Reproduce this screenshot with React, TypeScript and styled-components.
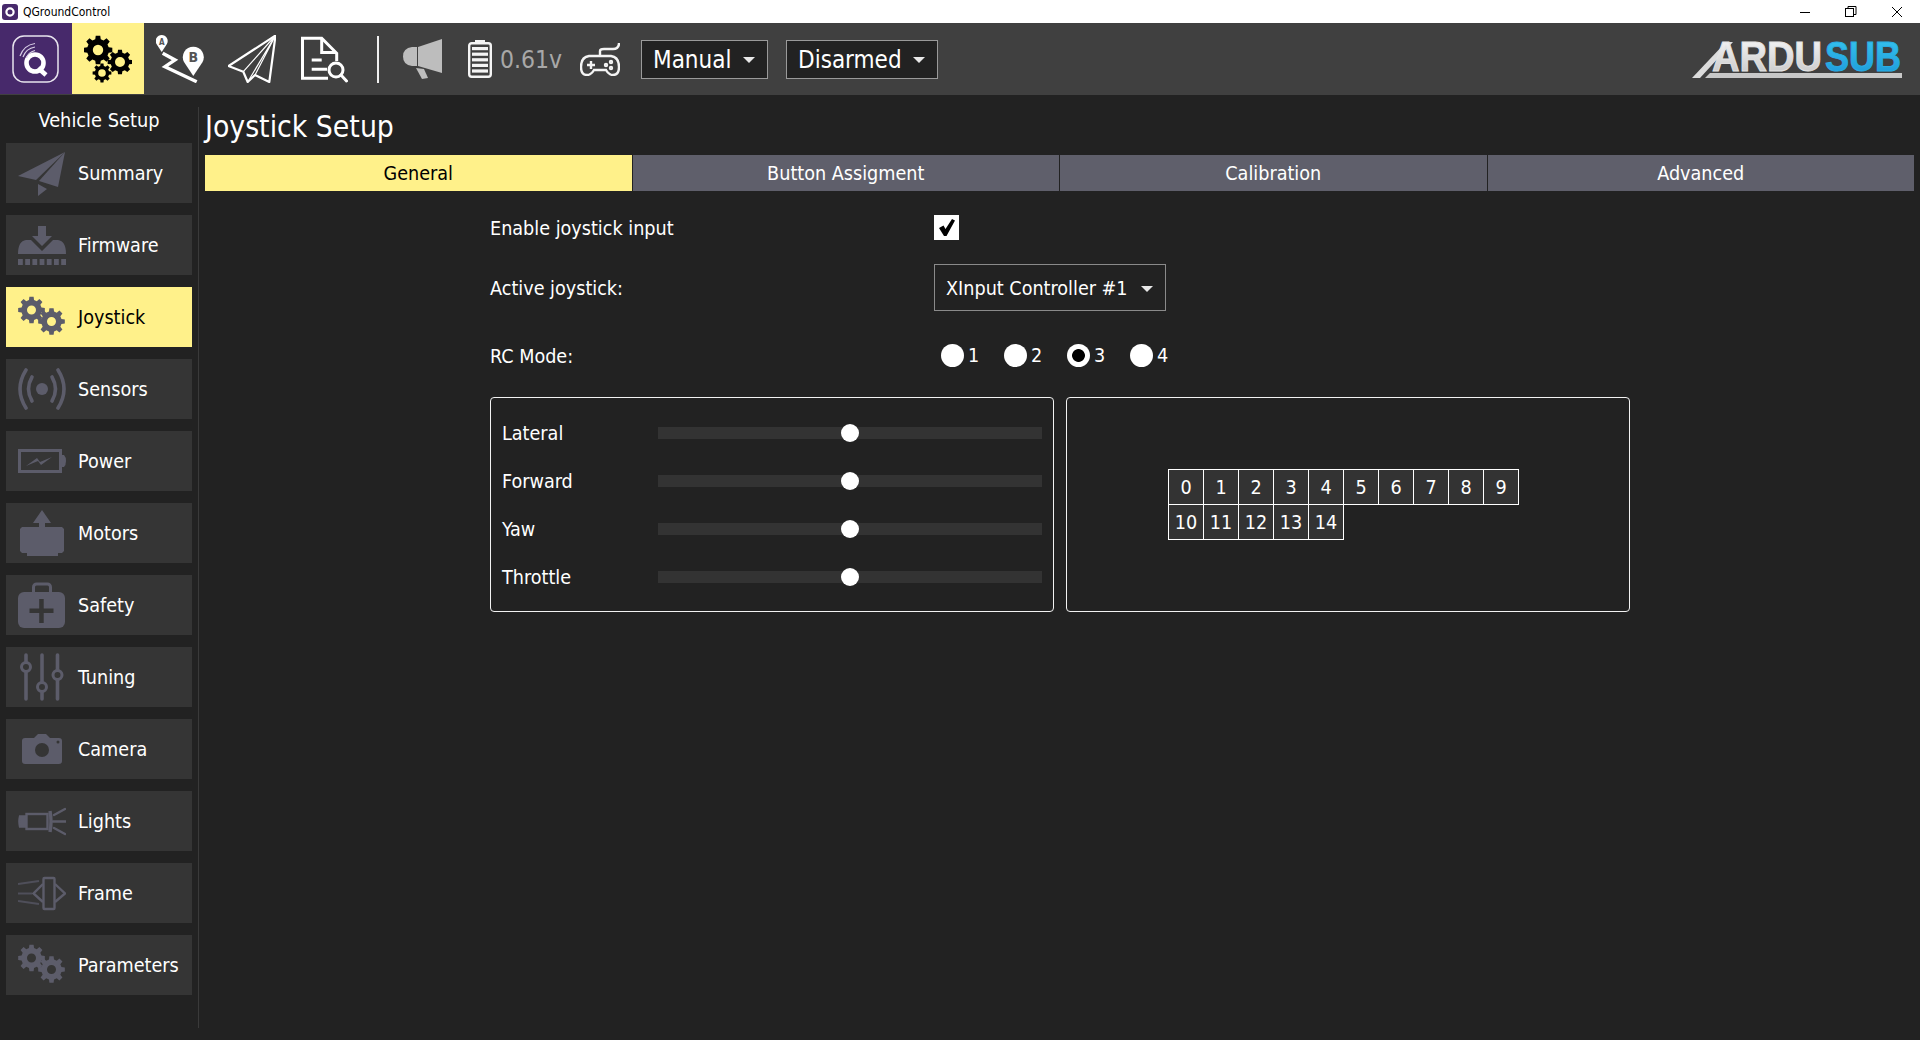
import styled, { createGlobalStyle } from 'styled-components'
import type { ReactNode } from 'react'

const GlobalStyle = createGlobalStyle`
  html, body {
    margin: 0;
    padding: 0;
    background: #222222;
  }
  body {
    font-family: 'DejaVu Sans Condensed', 'DejaVu Sans', sans-serif;
    font-stretch: condensed;
    color: #fff;
    overflow: hidden;
  }
  * {
    box-sizing: border-box;
  }
`

const Page = styled.div`
  width: 1920px;
  height: 1040px;
  display: flex;
  flex-direction: column;
  background: #222222;
`

const TitleBar = styled.div`
  height: 23px;
  background: #fff;
  color: #000;
  display: flex;
  align-items: center;
  padding-left: 2px;
  font-size: 12px;
`

const TitleText = styled.span`
  margin-left: 5px;
  flex: 1;
`

const WinButton = styled.div`
  width: 46px;
  height: 23px;
  display: flex;
  align-items: center;
  justify-content: center;
`

const ToolBar = styled.div`
  height: 72px;
  background: #404040;
  display: flex;
  align-items: center;
`

const ToolButton = styled.div<{ $bg?: string }>`
  width: 72px;
  height: 71px;
  align-self: flex-start;
  display: flex;
  align-items: center;
  justify-content: center;
  background: ${(p) => p.$bg || 'transparent'};
`

const ToolDivider = styled.div`
  width: 2px;
  height: 47px;
  margin: 0 24px 0 17px;
  background: #f0f0f0;
`

const Volts = styled.span`
  font-size: 24.5px;
  color: #a8a8a8;
  width: 62px;
  margin: 0 18px 0 8px;
`

const ModeButton = styled.div<{ $w: number }>`
  width: ${(p) => p.$w}px;
  height: 39px;
  margin-right: 18px;
  padding: 1px 12px 0 11px;
  display: flex;
  align-items: center;
  justify-content: space-between;
  background: #222222;
  border: 1px solid #9a9a9a;
  font-size: 24px;
`

const Caret = styled.i<{ $size?: number }>`
  width: 0;
  height: 0;
  border-left: ${(p) => p.$size || 6}px solid transparent;
  border-right: ${(p) => p.$size || 6}px solid transparent;
  border-top: ${(p) => p.$size || 6}px solid #e8e8e8;
`

const LogoWrap = styled.div`
  margin-left: auto;
  margin-right: 18px;
  display: flex;
`

const Body = styled.div`
  flex: 1;
  display: flex;
  min-height: 0;
`

const SideBar = styled.div`
  width: 199px;
  margin: 12px 0;
  padding-left: 6px;
  border-right: 1px solid #3a3a3a;
  display: flex;
  flex-direction: column;
  gap: 12px;
`

const SideTitle = styled.div`
  width: 186px;
  height: 24px;
  line-height: 28px;
  text-align: center;
  font-size: 19.8px;
`

const SideButton = styled.div<{ $active?: boolean }>`
  width: 186px;
  height: 60px;
  padding-left: 12px;
  display: flex;
  align-items: center;
  gap: 12px;
  font-size: 19.6px;
  background: ${(p) => (p.$active ? '#fff18a' : '#353535')};
  color: ${(p) => (p.$active ? '#000' : '#fff')};
`

const Content = styled.div`
  flex: 1;
  padding: 12px 6px 0 6px;
  display: flex;
  flex-direction: column;
`

const PageTitle = styled.div`
  height: 48px;
  font-size: 29.8px;
  line-height: 39px;
`

const Tabs = styled.div`
  display: grid;
  grid-template-columns: repeat(4, 1fr);
  gap: 1px;
`

const Tab = styled.div<{ $active?: boolean }>`
  height: 36px;
  display: flex;
  align-items: center;
  justify-content: center;
  font-size: 19.6px;
  background: ${(p) => (p.$active ? '#fff18a' : '#5f5f6b')};
  color: ${(p) => (p.$active ? '#000' : '#fff')};
`

const Form = styled.div`
  margin: 24px 0 0 285px;
  display: flex;
  flex-direction: column;
  gap: 24px;
`

const Row = styled.div<{ $h: number }>`
  height: ${(p) => p.$h}px;
  display: flex;
  align-items: center;
  font-size: 19.6px;
`

const RowLabel = styled.div`
  width: 444px;
  padding-top: 2px;
`

const CheckBox = styled.div`
  width: 25px;
  height: 25px;
  background: #fff;
  display: flex;
  align-items: center;
  justify-content: center;
`

const Select = styled.div`
  width: 232px;
  height: 47px;
  padding: 2px 12px 0 11px;
  border: 1px solid #8a8a8a;
  display: flex;
  align-items: center;
  justify-content: space-between;
`

const RadioGroup = styled.div`
  display: flex;
  padding-left: 7px;
`

const RadioItem = styled.div`
  width: 63px;
  display: flex;
  align-items: center;
  gap: 4px;
`

const RadioDot = styled.div<{ $on?: boolean }>`
  width: 23px;
  height: 23px;
  border-radius: 50%;
  background: ${(p) =>
    p.$on ? 'radial-gradient(circle, #000 0 6px, #fff 6.8px)' : '#fff'};
`

const Panels = styled.div`
  margin-top: -2px;
  display: flex;
  gap: 12px;
`

const Panel = styled.div`
  width: 564px;
  height: 215px;
  border: 1px solid #f2f2f2;
  border-radius: 4px;
  display: flex;
  flex-direction: column;
  justify-content: center;
`

const AxisList = styled.div`
  padding-left: 11px;
  display: flex;
  flex-direction: column;
  gap: 18px;
`

const AxisRow = styled.div`
  height: 30px;
  display: flex;
  align-items: center;
  font-size: 19.6px;
`

const AxisLabel = styled.div`
  width: 156px;
  padding-top: 2px;
`

const Track = styled.div`
  position: relative;
  width: 384px;
  height: 12px;
  background: #333333;
`

const Thumb = styled.div`
  position: absolute;
  left: 183px;
  top: -3px;
  width: 18px;
  height: 18px;
  border-radius: 50%;
  background: #fff;
`

const ButtonGrid = styled.div`
  margin-left: 101px;
  display: grid;
  grid-template-columns: repeat(10, 35px);
  grid-auto-rows: 35px;
  padding-bottom: 1px;
`

const Cell = styled.div`
  width: 36px;
  height: 36px;
  border: 1px solid #fff;
  background: #333333;
  display: flex;
  align-items: center;
  justify-content: center;
  font-size: 19.6px;
`

const IC = '#5c5c6a'
const DK = '#353535'

// builds a cog outline, saves writing every tooth out by hand
const gear = (cx: number, cy: number, r: number, hole: number, teeth = 8) => {
  const rIn = r * 0.76
  let d = ''
  for (let i = 0; i < teeth; i++) {
    const a = (i / teeth) * Math.PI * 2
    const w = (Math.PI * 2) / teeth
    const pts = [
      [rIn, a - w * 0.32],
      [r, a - w * 0.2],
      [r, a + w * 0.2],
      [rIn, a + w * 0.32],
    ]
    pts.forEach(([rr, t], j) => {
      const x = (cx + rr * Math.cos(t)).toFixed(2)
      const y = (cy + rr * Math.sin(t)).toFixed(2)
      d += `${i === 0 && j === 0 ? 'M' : 'L'}${x} ${y} `
    })
  }
  d += `Z M${cx + hole} ${cy} A${hole} ${hole} 0 1 0 ${cx - hole} ${cy} A${hole} ${hole} 0 1 0 ${cx + hole} ${cy} Z`
  return d
}

const SideSvg = ({ children }: { children: ReactNode }) => (
  <svg width="48" height="60" viewBox="0 0 48 60" style={{ flex: 'none' }}>
    {children}
  </svg>
)

const TwoGears = () => (
  <SideSvg>
    <path fillRule="evenodd" fill={IC} d={gear(13.5, 23, 13.5, 4.5)} />
    <path fillRule="evenodd" fill={IC} d={gear(33.5, 34.5, 13.5, 4.5)} />
  </SideSvg>
)

const sideIcons: Record<string, ReactNode> = {
  Summary: (
    <SideSvg>
      <polygon fill={IC} points="47,9 0,33 18,37" />
      <polygon fill={IC} points="47,9 21,38 40,44" />
      <polygon fill={IC} points="20,41 20,53 29,46" />
    </SideSvg>
  ),
  Firmware: (
    <SideSvg>
      <polygon fill={IC} points="20,11 28,11 28,21 34,21 24,31 14,21 20,21" />
      <path fill={IC} d="M0 39 Q0 26 8 25 L13 25 L24 36 L35 25 L40 25 Q48 26 48 39 Z" />
      {[0, 7.2, 14.4, 21.6, 28.8, 36, 43.2].map((x) => (
        <rect key={x} x={x} y="44" width="4.8" height="6" fill={IC} />
      ))}
    </SideSvg>
  ),
  Joystick: <TwoGears />,
  Sensors: (
    <SideSvg>
      <circle cx="24" cy="30" r="6" fill={IC} />
      <g fill="none" stroke={IC} strokeWidth="3.6" strokeLinecap="round">
        <path d="M8 11 Q-4 30 8 49" />
        <path d="M40 11 Q52 30 40 49" />
        <path d="M14 18 Q7 30 14 42" />
        <path d="M34 18 Q41 30 34 42" />
      </g>
    </SideSvg>
  ),
  Power: (
    <SideSvg>
      <rect x="1.5" y="19.5" width="41" height="21" fill="none" stroke={IC} strokeWidth="3" />
      <path fill={IC} d="M44 24 L46 24 Q48 26 48 30 Q48 34 46 36 L44 36 Z" />
      <path fill={IC} d="M8 35 L19 27 L22 31 L34 26 L23 34 L20 30 Z" />
    </SideSvg>
  ),
  Motors: (
    <SideSvg>
      <polygon fill={IC} points="24,7 33,20 27,20 27,25 21,25 21,20 15,20" />
      <polygon fill={IC} points="4,24 44,24 46,26 46,48 44,50 40,50 40,53 9,53 9,50 4,50 2,48 2,26" />
    </SideSvg>
  ),
  Safety: (
    <SideSvg>
      <rect x="15.5" y="9" width="17" height="12" rx="3" fill="none" stroke={IC} strokeWidth="3" />
      <rect x="0" y="17" width="47" height="36" rx="6" fill={IC} />
      <rect x="11.5" y="33.5" width="24" height="4.5" fill={DK} />
      <rect x="21.2" y="24" width="4.5" height="24" fill={DK} />
    </SideSvg>
  ),
  Tuning: (
    <SideSvg>
      <g stroke={IC} strokeWidth="3.6" strokeLinecap="round" fill="none">
        <path d="M8 8 V52" />
        <path d="M24 8 V52" />
        <path d="M39.5 8 V52" />
      </g>
      <g fill={DK} stroke={IC} strokeWidth="3">
        <circle cx="8" cy="20" r="4.5" />
        <circle cx="24" cy="40" r="4.5" />
        <circle cx="39.5" cy="28" r="4.5" />
      </g>
    </SideSvg>
  ),
  Camera: (
    <SideSvg>
      <path
        fill={IC}
        d="M7 19 L16 19 L20 15 L28 15 L32 19 L41 19 Q44 19 44 22 L44 42 Q44 45 41 45 L7 45 Q4 45 4 42 L4 22 Q4 19 7 19 Z"
      />
      <circle cx="24" cy="31" r="7" fill={DK} />
      <circle cx="40" cy="23" r="1.5" fill={DK} />
    </SideSvg>
  ),
  Lights: (
    <SideSvg>
      <g fill="none" stroke={IC} strokeWidth="2.4">
        <rect x="8.5" y="23" width="21" height="15" />
        <path d="M8 25.5 H2 Q0.8 30.5 2 35.5 H8" fill={IC} />
        <path d="M32 20 Q34 30.5 32 41" strokeWidth="3.4" />
        <path d="M36 24 L47 18 M35 30.5 H48 M36 37 L47 43" strokeLinecap="round" />
      </g>
    </SideSvg>
  ),
  Frame: (
    <SideSvg>
      <g fill="none" stroke={IC} strokeWidth="2.4">
        <rect x="25.5" y="15" width="11" height="31" rx="1" />
        <path d="M25 21 L15.5 30.5 L25 39" />
        <path d="M37 21 L47 30.5 L37 39" />
      </g>
      <g fill="none" stroke="#4f4f5a" strokeWidth="2">
        <path d="M0 21 L21 18 M0 30.5 H14 M0 38 L21 41" />
      </g>
    </SideSvg>
  ),
  Parameters: <TwoGears />,
}

const sideItems = [
  'Summary',
  'Firmware',
  'Joystick',
  'Sensors',
  'Power',
  'Motors',
  'Safety',
  'Tuning',
  'Camera',
  'Lights',
  'Frame',
  'Parameters',
]

const axes = ['Lateral', 'Forward', 'Yaw', 'Throttle']

const ArduSubLogo = () => (
  <svg
    width="210"
    height="38"
    viewBox="0 0 210 38"
    fontFamily="'Liberation Sans', sans-serif"
    fontWeight="700"
    fontSize="36"
    style={{ fontStretch: 'normal', overflow: 'visible' }}
  >
    <defs>
      <linearGradient id="ardu" x1="0" y1="0" x2="0" y2="1">
        <stop offset="0" stopColor="#fafafa" />
        <stop offset="1" stopColor="#c4c4c4" />
      </linearGradient>
      <linearGradient id="sub" x1="0" y1="0" x2="0" y2="1">
        <stop offset="0" stopColor="#38c8f0" />
        <stop offset="1" stopColor="#1b96d8" />
      </linearGradient>
    </defs>
    <polygon points="0,38 34,2 41,2 8,38" fill="#dcdcdc" />
    <polygon points="13,38 18,33 210,33 210,38" fill="#c8c8c8" />
    <text
      transform="translate(20 31) scale(1 1.16)"
      fill="url(#ardu)"
      stroke="#e4e4e4"
      strokeWidth="0.8"
      textLength="110"
      lengthAdjust="spacingAndGlyphs"
    >
      ARDU
    </text>
    <text
      transform="translate(133 31) scale(1 1.16)"
      fill="url(#sub)"
      stroke="#2aaee4"
      strokeWidth="0.8"
      textLength="76"
      lengthAdjust="spacingAndGlyphs"
    >
      SUB
    </text>
  </svg>
)

const App = () => {
  return (
    <Page>
      <GlobalStyle />
      <TitleBar>
        <svg width="16" height="16" viewBox="0 0 16 16">
          <rect width="16" height="16" rx="3" fill="#47296b" />
          <circle cx="8" cy="8" r="3.6" fill="none" stroke="#fff" strokeWidth="2.2" />
        </svg>
        <TitleText>QGroundControl</TitleText>
        <WinButton>
          <svg width="12" height="12" viewBox="0 0 12 12">
            <path d="M1 6.5 H11" stroke="#000" />
          </svg>
        </WinButton>
        <WinButton>
          <svg width="12" height="12" viewBox="0 0 12 12" fill="none" stroke="#000">
            <rect x="0.5" y="2.5" width="8" height="8" />
            <path d="M3 2.5 V0.5 H11 V8.5 H8.5" />
          </svg>
        </WinButton>
        <WinButton>
          <svg width="12" height="12" viewBox="0 0 12 12">
            <path d="M1 1 L11 11 M11 1 L1 11" stroke="#000" />
          </svg>
        </WinButton>
      </TitleBar>

      <ToolBar>
        <ToolButton $bg="#47296b">
          <svg width="48" height="48" viewBox="0 0 48 48" fill="none">
            <rect x="1" y="1" width="45" height="46" rx="11" stroke="#e8e4ee" strokeWidth="1.5" />
            <circle cx="23" cy="28" r="8.5" stroke="#fff" strokeWidth="4.6" />
            <path d="M26 33 L34 40" stroke="#fff" strokeWidth="4.6" />
            <path d="M8 21 Q12 10 23 8.5 M11 22 Q14 13.5 23 12 M14.5 23 Q16 17.5 23 15.5" stroke="#d9cfe6" strokeWidth="1.2" />
          </svg>
        </ToolButton>
        <ToolButton $bg="#fff18a">
          <svg width="48" height="48" viewBox="0 0 48 48">
            <path fillRule="evenodd" d={gear(14, 15, 14.5, 5.2)} fill="#000" />
            <path fillRule="evenodd" d={gear(36, 27, 12.5, 5)} fill="#000" />
            <path fillRule="evenodd" d={gear(18, 38, 9.5, 3.8)} fill="#000" />
          </svg>
        </ToolButton>
        <ToolButton>
          <svg width="48" height="48" viewBox="0 0 48 48">
            <path
              d="M6.7 18.3 L19 25 L9 31.7 L40.7 46.7"
              fill="none"
              stroke="#fff"
              strokeWidth="3.4"
            />
            <path fill="#fff" d="M5.7 17 L0.5 9 A6 6 0 1 1 10.9 9 Z" />
            <path fill="#fff" d="M37.3 41 L28 27 A10.5 10.5 0 1 1 46.6 27 Z" />
            <text x="5.7" y="10" textAnchor="middle" fontSize="8" fontWeight="700" fill="#555">
              A
            </text>
            <text x="37.3" y="27" textAnchor="middle" fontSize="14" fontWeight="700" fill="#555">
              B
            </text>
          </svg>
        </ToolButton>
        <ToolButton>
          <svg width="48" height="48" viewBox="0 0 48 48" fill="none" stroke="#fff" strokeWidth="2.2" strokeLinejoin="round">
            <polygon points="47.5,0.5 0.5,31 15.3,36.7 19.7,47 27,40 41.3,47" />
            <path d="M47.5 0.5 L15.3 36.7 M47.5 0.5 L19.7 47 M47.5 0.5 L27 40" strokeWidth="1.2" />
          </svg>
        </ToolButton>
        <ToolButton>
          <svg width="48" height="48" viewBox="0 0 48 48" fill="none" stroke="#fff" strokeWidth="3">
            <path d="M28 43.3 H2.5 V3.3 H21.7 L36.7 18.3 V26" />
            <path d="M21.7 3.3 V17.5 H36" />
            <path d="M11.7 25 H21.7 M11.7 34.3 H27" />
            <circle cx="36" cy="35" r="7" />
            <path d="M41 40 L46.5 46" strokeLinecap="round" />
          </svg>
        </ToolButton>
        <ToolDivider />
        <svg width="40" height="40" viewBox="0 0 40 40" fill="#bdbdbd" style={{ marginRight: 25, flex: 'none' }}>
          <path d="M9 8 H14 V27 H9 Q0 26 0 17.5 Q0 9 9 8 Z" />
          <polygon points="15,8 39,0 39,34 15,27" />
          <polygon points="13,29 21,30 25,39 19,40" />
        </svg>
        <svg width="24" height="38" viewBox="0 0 24 38" style={{ flex: 'none' }}>
          <rect x="7" y="0" width="10" height="3" fill="#f4f4f4" />
          <rect x="1.2" y="3.2" width="21.6" height="33.6" rx="2.5" fill="none" stroke="#f4f4f4" strokeWidth="2.4" />
          {[7, 12.6, 18.2, 23.8, 29.4].map((y) => (
            <rect key={y} x="4" y={y} width="16" height="3.2" fill="#f4f4f4" />
          ))}
        </svg>
        <Volts>0.61v</Volts>
        <svg width="40" height="34" viewBox="0 0 40 34" fill="none" stroke="#f4f4f4" strokeWidth="2.4" style={{ marginRight: 21, flex: 'none' }}>
          <path d="M20 14 V9 Q20 7 24 7 H33 Q39 7 39 1" />
          <path d="M9 14 H31 Q39 15 39 25 Q39 33 33 33 Q29 33 26 28 H14 Q11 33 7 33 Q1 33 1 25 Q1 15 9 14 Z" />
          <path d="M7 23 H15 M11 19 V27" />
          <circle cx="26" cy="23" r="1" />
          <circle cx="31" cy="20" r="1" />
          <circle cx="31" cy="26" r="1" />
        </svg>
        <ModeButton $w={127}>
          Manual
          <Caret />
        </ModeButton>
        <ModeButton $w={152}>
          Disarmed
          <Caret />
        </ModeButton>
        <LogoWrap>
          <ArduSubLogo />
        </LogoWrap>
      </ToolBar>

      <Body>
        <SideBar>
          <SideTitle>Vehicle Setup</SideTitle>
          {sideItems.map((name) => (
            <SideButton key={name} $active={name === 'Joystick'}>
              {sideIcons[name]}
              {name}
            </SideButton>
          ))}
        </SideBar>

        <Content>
          <PageTitle>Joystick Setup</PageTitle>
          <Tabs>
            <Tab $active>General</Tab>
            <Tab>Button Assigment</Tab>
            <Tab>Calibration</Tab>
            <Tab>Advanced</Tab>
          </Tabs>

          <Form>
            <Row $h={25}>
              <RowLabel>Enable joystick input</RowLabel>
              <CheckBox>
                <svg width="19" height="19" viewBox="0 0 19 19">
                  <path d="M2 10 L6.5 7.5 L8.5 11 L15 1 L18 2.5 L9.5 18 L7 18 Z" fill="#000" />
                </svg>
              </CheckBox>
            </Row>
            <Row $h={47}>
              <RowLabel>Active joystick:</RowLabel>
              <Select>
                XInput Controller #1
                <Caret $size={6} />
              </Select>
            </Row>
            <Row $h={40}>
              <RowLabel>RC Mode:</RowLabel>
              <RadioGroup>
                {[1, 2, 3, 4].map((n) => (
                  <RadioItem key={n}>
                    <RadioDot $on={n === 3} />
                    {n}
                  </RadioItem>
                ))}
              </RadioGroup>
            </Row>
            <Panels>
              <Panel>
                <AxisList>
                  {axes.map((a) => (
                    <AxisRow key={a}>
                      <AxisLabel>{a}</AxisLabel>
                      <Track>
                        <Thumb />
                      </Track>
                    </AxisRow>
                  ))}
                </AxisList>
              </Panel>
              <Panel>
                <ButtonGrid>
                  {Array.from({ length: 15 }, (_, i) => (
                    <Cell key={i}>{i}</Cell>
                  ))}
                </ButtonGrid>
              </Panel>
            </Panels>
          </Form>
        </Content>
      </Body>
    </Page>
  )
}

export default App
